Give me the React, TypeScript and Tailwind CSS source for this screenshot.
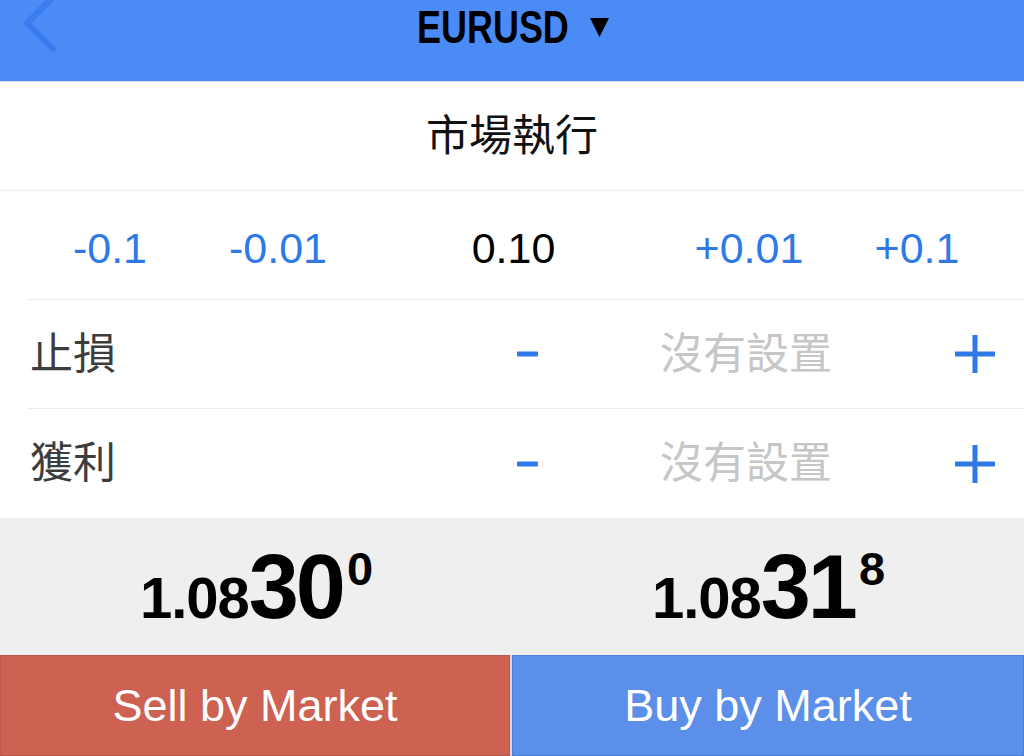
import React from "react";

const sans = "font-['Liberation_Sans','Noto_Sans_CJK_TC',sans-serif]";

function Minus() {
  return (
    <svg width="21" height="6" viewBox="0 0 21 6" className="block">
      <rect x="0" y="0.5" width="21" height="5" rx="1" fill="#2f79e6" />
    </svg>
  );
}

function Plus() {
  return (
    <svg width="40" height="38" viewBox="0 0 40 38" className="block">
      <rect x="0" y="16.5" width="40" height="5" fill="#2f79e6" />
      <rect x="17.5" y="0" width="5" height="38" fill="#2f79e6" />
    </svg>
  );
}

function StopRow({ label, last }: { label: string; last?: boolean }) {
  return (
    <div className="pl-[28px]">
      <div
        className={`flex h-[109px] items-center ${last ? "" : "border-b border-[#ececec]"}`}
      >
        <span className="flex-1 pl-[2px] text-[43px] leading-none text-[#3d3d3d]">{label}</span>
        <Minus />
        <span className="ml-[122px] w-[172px] text-[43px] leading-none text-[#c6c6c6]">
          沒有設置
        </span>
        <span className="ml-[123px] mr-[29px]">
          <Plus />
        </span>
      </div>
    </div>
  );
}

function Price({ main, big, sup }: { main: string; big: string; sup: string }) {
  return (
    <div className="flex flex-1 items-center justify-center">
      <div className="flex items-baseline font-bold leading-none text-black tracking-[-1px]">
        <span className="text-[58px]">{main}</span>
        <span className="text-[90px] tracking-[-3px]">{big}</span>
        <span className="ml-[4px] mt-[3px] self-start text-[47px]">{sup}</span>
      </div>
    </div>
  );
}

const lotBtn = "w-[168px] text-center text-[43px] leading-none text-[#2f79e6]";

export default function App() {
  return (
    <div className={`${sans} relative h-[756px] w-[1024px] overflow-hidden bg-white`}>
      {/* nav bar */}
      <div className="relative flex h-[82px] justify-center border-b border-[#d6dbe3] bg-[#4a8bf5]">
        <svg
          width="40"
          height="60"
          viewBox="0 0 40 60"
          className="absolute left-[18px] top-[-6px]"
        >
          <polyline
            points="35,3 9,29 35,55"
            fill="none"
            stroke="#3a7bef"
            strokeWidth="6"
            strokeLinecap="round"
            strokeLinejoin="round"
          />
        </svg>
        <div className="flex items-start pt-[3px] pl-[2px]">
          <span className="-mr-[46px] inline-block origin-left scale-x-[0.765] whitespace-nowrap text-[47px] font-bold leading-none text-black">
            EURUSD
          </span>
          <svg width="19" height="20" viewBox="0 0 19 20" className="ml-[21px] mt-[15px]">
            <polygon points="0,0 19,0 9.5,19" fill="#000" />
          </svg>
        </div>
      </div>

      {/* order type */}
      <div className="flex h-[109px] items-center justify-center border-b border-[#ececec]">
        <span className="text-[43px] leading-none text-[#111]">市場執行</span>
      </div>

      {/* volume */}
      <div className="pl-[28px]">
        <div className="flex h-[109px] items-center border-b border-[#ececec] pt-[6px]">
          <button className={`${lotBtn} -ml-[2px]`}>-0.1</button>
          <button className={lotBtn}>-0.01</button>
          <span className="flex-1 text-center text-[43px] leading-none text-black">0.10</span>
          <button className={lotBtn}>+0.01</button>
          <button className={`${lotBtn} mr-[23px]`}>+0.1</button>
        </div>
      </div>

      <StopRow label="止損" />
      <StopRow label="獲利" last />

      {/* prices */}
      <div className="flex h-[137px] bg-[#efefef]">
        <Price main="1.08" big="30" sup="0" />
        <Price main="1.08" big="31" sup="8" />
      </div>

      {/* actions */}
      <div className="flex h-[101px] bg-[#ddd3dc]">
        <button className="flex w-[510px] items-center justify-center border border-[#b9594b] bg-[#cd6152] text-[45px] leading-none text-white">
          Sell by Market
        </button>
        <button className="ml-[2px] flex flex-1 items-center justify-center border border-[#4d80dc] bg-[#5b8fe9] text-[45px] leading-none text-white">
          Buy by Market
        </button>
      </div>
    </div>
  );
}
